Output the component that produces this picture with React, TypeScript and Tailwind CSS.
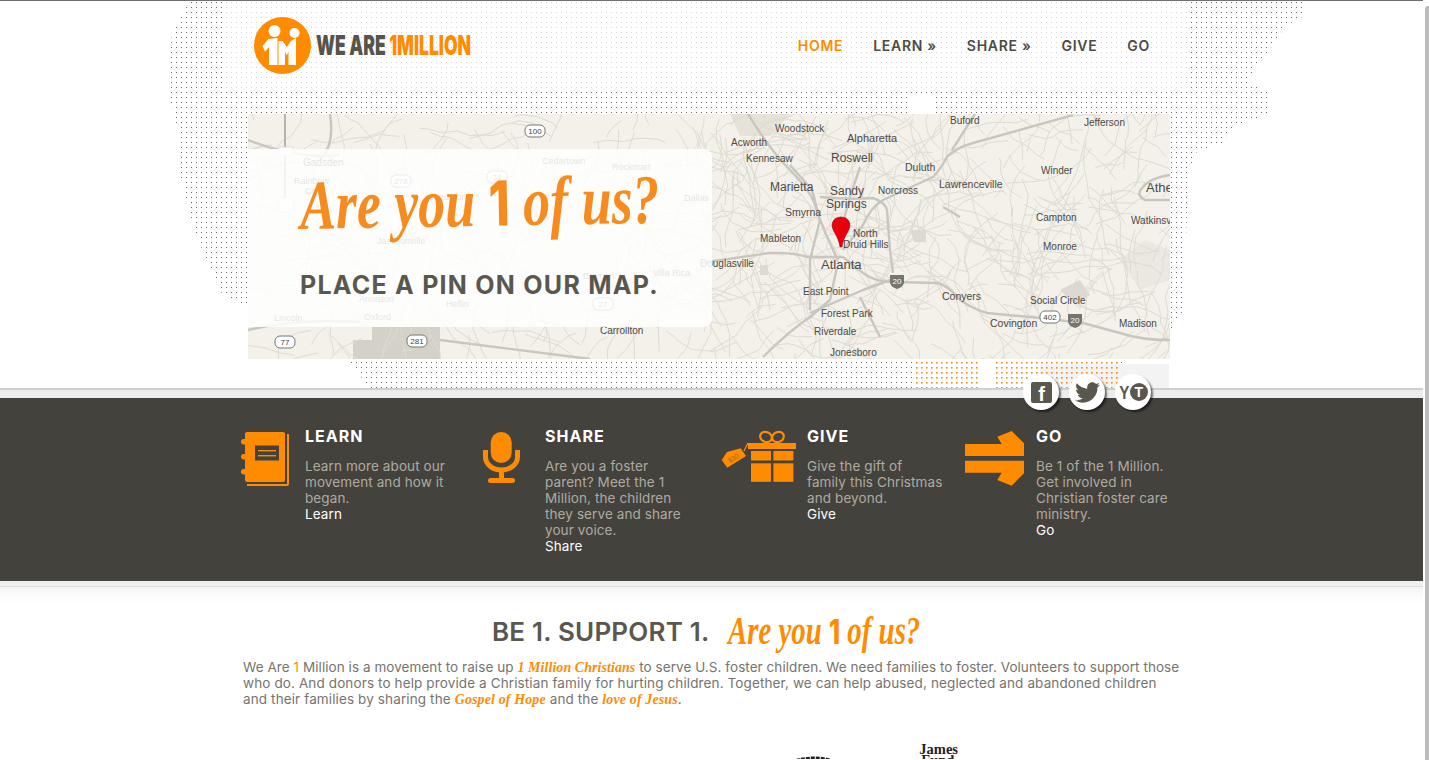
import React from "react";
import { FaTwitter } from "react-icons/fa";

const SCRIPT = "font-['Liberation_Serif',serif] italic font-bold";

function makeRoads() {
  let s = 12345;
  const r = () => {
    s = (s * 16807) % 2147483647;
    return s / 2147483647;
  };
  const out: string[] = [];
  for (let i = 0; i < 620; i++) {
    const dense = i < 430;
    const cx = dense ? 700 + r() * 470 : 248 + r() * 460;
    const cy = 114 + r() * 245;
    let x = cx;
    let y = cy;
    let a = r() * 6.28;
    let d = `M${x.toFixed(1)} ${y.toFixed(1)}`;
    const n = 3 + Math.floor(r() * 5);
    for (let k = 0; k < n; k++) {
      a += (r() - 0.5) * 1.1;
      const l = 6 + r() * 12;
      x += Math.cos(a) * l;
      y += Math.sin(a) * l;
      d += `L${x.toFixed(1)} ${y.toFixed(1)}`;
    }
    out.push(d);
  }
  return out;
}
const minorRoads = makeRoads();

const majorRoads = [
  "M748 114 Q770 150 790 170 T815 205 T825 232 T838 260",
  "M1073 115 L973 143 Q955 148 947 157 Q940 170 933 177 L883 200 Q870 208 863 225 L843 250",
  "M843 257 L863 273 Q875 282 893 282 L937 283 Q948 285 960 300 Q975 310 987 313 L1040 318 L1083 323 L1120 333 Q1140 340 1170 340",
  "M700 263 L770 253 Q790 252 808 257 L843 257",
  "M837 267 L830 300 L810 317",
  "M810 310 L810 260 L820 220 L812 190 L790 165",
  "M820 197 Q850 200 873 198 Q885 202 887 210 L890 250 L893 273",
  "M810 313 Q840 300 863 290 L890 280",
  "M860 167 L850 197 L843 223",
  "M943 207 L960 217",
  "M1170 175 Q1150 178 1143 187 Q1135 195 1145 200 L1170 200",
  "M880 337 L860 297",
  "M763 357 Q790 330 813 315",
  "M320 160 Q335 145 330 114",
  "M975 114 L952 150",
  "M248 140 Q300 160 340 155",
  "M440 340 Q520 350 590 359",
  "M248 330 Q300 318 360 322",
];

type L = [string, number, number, number];
const labels: L[] = [
  ["Woodstock", 775, 132, 10],
  ["Alpharetta", 847, 142, 11],
  ["Acworth", 731, 146, 10],
  ["Kennesaw", 746, 162, 10],
  ["Roswell", 831, 162, 12],
  ["Duluth", 905, 171, 10.5],
  ["Buford", 950, 124, 10],
  ["Jefferson", 1084, 126, 10],
  ["Winder", 1041, 174, 10],
  ["Lawrenceville", 939, 188, 10.5],
  ["Norcross", 878, 194, 10],
  ["Sandy", 830, 195, 12],
  ["Springs", 826, 208, 12],
  ["Marietta", 770, 191, 12],
  ["Smyrna", 785, 216, 10.5],
  ["Campton", 1036, 221, 10],
  ["Athe", 1146, 192, 13],
  ["Watkinsv", 1131, 224, 10],
  ["North", 853, 237, 10],
  ["Druid Hills", 843, 248, 10],
  ["Mableton", 760, 242, 10],
  ["Monroe", 1043, 250, 10],
  ["Douglasville", 700, 267, 10],
  ["Atlanta", 821, 269, 13],
  ["East Point", 803, 295, 10],
  ["Conyers", 942, 300, 10.5],
  ["Social Circle", 1030, 304, 10],
  ["Forest Park", 821, 317, 10],
  ["Covington", 990, 327, 10.5],
  ["Madison", 1119, 327, 10],
  ["Riverdale", 814, 335, 10],
  ["Jonesboro", 830, 356, 10],
  ["Carrollton", 600, 334, 10],
  ["Gadsden", 303, 166, 10],
  ["Rainbow", 294, 184, 9],
  ["City", 305, 194, 9],
  ["Cedartown", 542, 164, 9],
  ["Rockmart", 612, 170, 9],
  ["Dallas", 684, 201, 9],
  ["Piedmont", 431, 200, 9],
  ["Jacksonville", 377, 244, 9],
  ["Anniston", 359, 302, 9],
  ["Heflin", 446, 307, 9],
  ["Lincoln", 274, 321, 9],
  ["Oxford", 364, 320, 9],
  ["Bremen", 583, 279, 9],
  ["Villa Rica", 653, 276, 9],
];

const shields: [string, number, number][] = [
  ["100", 535, 131],
  ["278", 401, 181],
  ["74", 497, 177],
  ["27", 603, 304],
  ["77", 285, 342],
  ["281", 417, 341],
  ["402", 1050, 317],
];
const interstates: [number, number][] = [
  [897, 281],
  [1075, 320],
];

function USMap() {
  return (
    <svg viewBox="248 114 922 245" className="absolute inset-0 w-full h-full">
      <rect x="248" y="114" width="922" height="245" fill="#f4f1ea" />
      <path d="M353 359 L353 340 L372 340 L372 327 L440 327 L440 359 Z" fill="#d4d1c9" />
      <path d="M1120 260 l25 -20 l25 10 v30 l-30 10 Z" fill="#ebe8e1" />
      <path d="M730 114 h60 l-20 22 h-30 Z" fill="#e5e2da" />
      <path d="M910 230 h16 v12 h-12 Z M760 265 h8 v10 h-8 Z M1060 290 l20 -10 l10 15 l-15 10 Z" fill="#dcd9d1" />
      <g fill="none" stroke="#dedbd3" strokeWidth="1">
        {minorRoads.map((d, i) => (
          <path key={i} d={d} />
        ))}
      </g>
      <g fill="none" stroke="#c9c6bf" strokeWidth="2.4" strokeLinejoin="round">
        {majorRoads.map((d, i) => (
          <path key={i} d={d} />
        ))}
      </g>
      <line x1="285" y1="114" x2="285" y2="205" stroke="#b5b2ab" strokeWidth="2" />
      <rect x="279" y="147" width="14" height="8" rx="1" fill="#fff" stroke="#ddd" />
      <rect x="279" y="198" width="14" height="14" rx="1" fill="#fff" stroke="#ddd" />
      {shields.map(([t, x, y], i) => (
        <g key={i}>
          <rect x={x - 10} y={y - 6} width="20" height="12" rx="5" fill="#fff" stroke="#777" />
          <text x={x} y={y + 3} textAnchor="middle" fontSize="8" fill="#444" fontFamily="Liberation Sans, sans-serif">
            {t}
          </text>
        </g>
      ))}
      {interstates.map(([x, y], i) => (
        <g key={i}>
          <path d={`M${x - 7} ${y - 6} h14 v7 q0 5 -7 7 q-7 -2 -7 -7 Z`} fill="#77756f" />
          <text x={x} y={y + 3} textAnchor="middle" fontSize="8" fill="#fff" fontFamily="Liberation Sans, sans-serif">
            20
          </text>
        </g>
      ))}
      {labels.map(([t, x, y, s], i) => (
        <text key={i} x={x} y={y} fontSize={s} fill="#4c4a46" fontFamily="Liberation Sans, sans-serif">
          {t}
        </text>
      ))}
    </svg>
  );
}

function Dots() {
  const country =
    "190,0 1306,0 1306,14 1285,25 1275,42 1260,60 1248,80 1270,92 1270,113 1235,125 1222,142 1195,152 1188,175 1186,240 1186,305 1170,330 1122,360 1122,389 370,389 350,360 300,330 222,293 195,232 180,172 178,130 168,92 172,30";
  return (
    <svg className="absolute left-0 top-0" width="1422" height="390" viewBox="0 0 1422 390">
      <defs>
        <pattern id="d" width="5" height="5" patternUnits="userSpaceOnUse">
          <rect x="1" y="1" width="1" height="1" fill="#666" />
        </pattern>
        <pattern id="o" width="5" height="5" patternUnits="userSpaceOnUse">
          <rect x="1" y="1" width="1.6" height="1.6" fill="#f08a14" />
        </pattern>
      </defs>
      <polygon points={country} fill="url(#d)" />
      <rect x="225" y="0" width="965" height="90" fill="#fff" opacity="0.72" />
      <rect x="908" y="92" width="24" height="22" fill="#fff" />
      <rect x="1040" y="363" width="129" height="27" fill="#f3f3f3" />
      <rect x="915" y="360" width="66" height="29" fill="#fff" />
      <rect x="981" y="360" width="12" height="29" fill="#fff" />
      <rect x="993" y="360" width="47" height="29" fill="#fff" />
      <rect x="915" y="360" width="66" height="29" fill="url(#o)" />
      <rect x="993" y="360" width="127" height="29" fill="url(#o)" />
    </svg>
  );
}

function Logo() {
  return (
    <svg width="57" height="57" viewBox="0 0 57 57" className="shrink-0">
      <circle cx="28.5" cy="28.5" r="28.5" fill="#ff8c00" />
      <circle cx="20.5" cy="14" r="6" fill="#fff" />
      <circle cx="40.5" cy="16" r="5" fill="#fff" />
      <polygon points="8.5,29 14.5,22 23.5,21 23.5,48 15,48 15,30 11,34.5" fill="#fff" />
      <polygon points="24.5,24 28.5,24 32.8,30 37,24 42,21 42,48 34.5,48 34.5,34.5 32.8,38.5 31,34.5 31,48 24.5,48" fill="#fff" />
    </svg>
  );
}

function Notebook() {
  return (
    <svg width="54" height="62" viewBox="0 0 54 62" className="shrink-0">
      <rect x="7" y="4" width="40" height="50" rx="2" fill="#ff8c00" />
      <path d="M49 6 h2 v50 a2 2 0 0 1 -2 2 h-40 v-2 h40 Z" fill="#ff8c00" />
      {[13.7, 28.7, 43.7].map((y) => (
        <rect key={y} x="3" y={y - 2.7} width="9" height="5.4" rx="2.7" fill="#ff8c00" />
      ))}
      <rect x="17" y="17.5" width="24" height="15" fill="#44423d" />
      <rect x="20" y="22" width="18" height="1.4" fill="#ff8c00" />
      <rect x="20" y="27" width="18" height="1.4" fill="#ff8c00" />
    </svg>
  );
}

function Mic() {
  return (
    <svg width="44" height="60" viewBox="0 0 44 60" className="shrink-0">
      <rect x="10.7" y="4" width="21" height="31" rx="10.5" fill="#ff8c00" />
      <path d="M5.5 22 v7 a16 13 0 0 0 32 0 v-7" fill="none" stroke="#ff8c00" strokeWidth="5" />
      <rect x="19" y="42" width="5" height="10" fill="#ff8c00" />
      <rect x="8" y="50" width="27" height="5" rx="2.5" fill="#ff8c00" />
    </svg>
  );
}

function Gift() {
  return (
    <svg width="80" height="58" viewBox="0 0 80 58" className="shrink-0">
      <rect x="28" y="15" width="48" height="6" fill="#ff8c00" />
      <rect x="31" y="23" width="20" height="9.5" fill="#ff8c00" />
      <rect x="53.4" y="23" width="20" height="9.5" fill="#ff8c00" />
      <rect x="31" y="35.3" width="20" height="18.5" fill="#ff8c00" />
      <rect x="53.4" y="35.3" width="20" height="18.5" fill="#ff8c00" />
      <ellipse cx="46" cy="9" rx="6" ry="5" fill="none" stroke="#ff8c00" strokeWidth="2.2" transform="rotate(25 46 9)" />
      <ellipse cx="58" cy="9" rx="6" ry="5" fill="none" stroke="#ff8c00" strokeWidth="2.2" transform="rotate(-25 58 9)" />
      <path d="M24 23 L28 15" stroke="#ff8c00" strokeWidth="1.2" />
      <polygon points="1.7,32 7,24 20.7,20.3 26,28 7.3,39.7" fill="#ff8c00" />
      <text x="13.5" y="32.5" fontSize="7" fill="#b3660a" textAnchor="middle" transform="rotate(-31 13.5 30)" fontFamily="Liberation Sans, sans-serif">
        $30
      </text>
    </svg>
  );
}

function Arrow() {
  return (
    <svg width="68" height="62" viewBox="0 0 68 62" className="shrink-0">
      <polygon points="5,16 41.7,16 37.3,8.7 51.7,3 64,15.3 64,28 5,28" fill="#ff8c00" />
      <polygon points="5,32.7 64,32.7 64,45.3 51.7,57.7 37.3,52 41.7,44.7 5,44.7" fill="#ff8c00" />
    </svg>
  );
}

function Social({ children }: { children: React.ReactNode }) {
  return (
    <div className="w-9 h-9 rounded-full bg-white shadow-[2px_2px_2px_rgba(0,0,0,0.55)] flex items-center justify-center text-[#5a574f]">
      {children}
    </div>
  );
}

function Feature({
  icon,
  title,
  lines,
  link,
  iconW,
}: {
  icon: React.ReactNode;
  title: string;
  lines: string[];
  link: string;
  iconW: string;
}) {
  return (
    <div className="flex">
      <div className={iconW}>{icon}</div>
      <div className="whitespace-nowrap">
        <div className="text-[16px] leading-[20px] font-bold text-white tracking-[1px]">{title}</div>
        <div className="mt-[12px] text-[13.5px] leading-[16px] tracking-[0.1px] text-[#aeaaa1]">
          {lines.map((l) => (
            <div key={l}>{l}</div>
          ))}
          <div className="text-white">{link}</div>
        </div>
      </div>
    </div>
  );
}

export default function App() {
  return (
    <div className="flex h-[760px] overflow-hidden bg-white font-['Inter',sans-serif]">
      <div className="w-[1423px] shrink-0 border-t border-[#6f6f6f]">
        <div className="relative h-[387px]">
          <Dots />
          <div className="relative flex h-[113px] items-start justify-between pl-[254px] pr-[273px] pt-[16px]">
            <div className="flex items-center gap-[5px]">
              <Logo />
              <div className="font-black text-[27px] leading-none whitespace-nowrap text-[#57544c] scale-x-[0.65] origin-left">
                WE ARE <span className="text-[#ff8c00]">1MILLION</span>
              </div>
            </div>
            <nav className="flex gap-[30px] text-[14px] font-semibold tracking-[0.7px] text-[#4d4a44] whitespace-nowrap mt-[18px]">
              <span className="text-[#ff8c00]">HOME</span>
              <span>LEARN »</span>
              <span>SHARE »</span>
              <span>GIVE</span>
              <span>GO</span>
            </nav>
          </div>
          <div className="relative ml-[248px] w-[922px] h-[245px] overflow-hidden">
            <USMap />
            <div className="absolute left-0 top-[35px] w-[464px] h-[178px] bg-white/85 rounded-r-[8px] pl-[52px]">
              <div className={`${SCRIPT} text-[#f68b1f] text-[70px] leading-[78px] mt-[18px] whitespace-nowrap -rotate-1 scale-x-[0.77] origin-left`}>
                Are you <span className="not-italic font-['Inter',sans-serif] font-extrabold text-[62px]">1</span> of us?
              </div>
              <div className="mt-[24px] text-[25px] leading-[30px] font-bold tracking-[1.25px] text-[#5a574f] whitespace-nowrap">
                PLACE A PIN ON OUR MAP.
              </div>
            </div>
            <svg className="absolute left-[582px] top-[102px]" width="22" height="32" viewBox="0 0 22 32">
              <path d="M11 1 C5 1 2 5 2 9.5 C2 15 8 19 10 31 H12 C14 19 20 15 20 9.5 C20 5 17 1 11 1 Z" fill="#e8000d" stroke="#8a0a0a" strokeWidth="0.5" />
            </svg>
          </div>
        </div>
        <div className="relative h-[10px] bg-[#ececec] border-t-2 border-[#cfcfcf]">
          <div className="absolute left-[1023px] top-[-16px] flex gap-[10px]">
            <Social>
              <div className="w-[21px] h-[21px] bg-[#5a574f] rounded-[2px] flex items-center justify-center">
                <span className="text-white font-['Liberation_Sans',sans-serif] font-bold text-[20px] leading-[20px] pt-[3px] pl-[1px]">f</span>
              </div>
            </Social>
            <Social>
              <FaTwitter className="w-[25px] h-[25px]" />
            </Social>
            <Social>
              <span className="font-['Liberation_Sans',sans-serif] font-bold text-[19px] leading-none scale-x-[0.8] -mr-[1px]">Y</span>
              <span className="w-[18px] h-[18px] rounded-full bg-[#5a574f] text-white text-[14px] font-bold leading-[18px] text-center font-['Liberation_Sans',sans-serif]">T</span>
            </Social>
          </div>
        </div>
        <div className="h-[183px] bg-[#44423d] grid grid-cols-[234px_245px_243px_1fr] pl-[238px] pt-[28px]">
          <Feature
            iconW="w-[67px] mt-[2px]"
            icon={<Notebook />}
            title="LEARN"
            lines={["Learn more about our", "movement and how it", "began."]}
            link="Learn"
          />
          <Feature
            iconW="w-[73px] mt-[2px] pl-[8px]"
            icon={<Mic />}
            title="SHARE"
            lines={["Are you a foster", "parent? Meet the 1", "Million, the children", "they serve and share", "your voice."]}
            link="Share"
          />
          <Feature
            iconW="w-[90px] mt-[2px] pl-[3px]"
            icon={<Gift />}
            title="GIVE"
            lines={["Give the gift of", "family this Christmas", "and beyond."]}
            link="Give"
          />
          <Feature
            iconW="w-[76px] mt-[2px]"
            icon={<Arrow />}
            title="GO"
            lines={["Be 1 of the 1 Million.", "Get involved in", "Christian foster care", "ministry."]}
            link="Go"
          />
        </div>
        <div className="h-[6px] bg-[#efefef] border-b border-[#dedede]" />
        <div className="h-[172px] overflow-hidden bg-[linear-gradient(#f5f5f5,#ffffff_16px)]">
          <div className="flex items-center pl-[492px] pt-[28px] h-[60px] whitespace-nowrap">
            <span className="text-[26px] font-semibold tracking-[0.2px] text-[#5a574f]">BE 1. SUPPORT 1.</span>
            <span className={`${SCRIPT} text-[#ff8c00] text-[39px] leading-[44px] ml-[19px] scale-x-[0.74] origin-left`}>
              Are you <span className="not-italic font-['Inter',sans-serif] font-extrabold text-[34px]">1</span> of us?
            </span>
          </div>
          <div className="pl-[243px] mt-[12px] text-[13.5px] leading-[16px] text-[#77746e] whitespace-nowrap">
            <div className="h-[16px] tracking-[0.06px]">
              We Are <span className="text-[#ff8c00]">1</span> Million is a movement to raise up{" "}
              <span className={`${SCRIPT} text-[#ff8c00] text-[14px] leading-[14px]`}>1 Million Christians</span> to serve U.S. foster children. We need families to foster. Volunteers to support those
            </div>
            <div className="h-[16px] tracking-[0.12px]">who do. And donors to help provide a Christian family for hurting children. Together, we can help abused, neglected and abandoned children</div>
            <div className="h-[16px] tracking-[0.12px]">
              and their families by sharing the <span className={`${SCRIPT} text-[#ff8c00] text-[14px] leading-[14px]`}>Gospel of Hope</span> and the{" "}
              <span className={`${SCRIPT} text-[#ff8c00] text-[14px] leading-[14px]`}>love of Jesus</span>.
            </div>
          </div>
          <div className="relative h-[40px] mt-[36px]">
            <svg className="absolute left-[780px] top-[11px]" width="68" height="12" viewBox="0 0 68 12">
              <path d="M2 12 Q34 -4 66 12" fill="none" stroke="#222" strokeWidth="3" strokeDasharray="4 1" />
            </svg>
            <div className="absolute left-[916px] top-[1px] font-['Liberation_Serif',serif] font-bold text-[14.5px] leading-[11px] text-[#222] text-right w-[42px]">
              James<br />Fund.
            </div>
          </div>
        </div>
      </div>
      <div className="flex-1 pl-[2px] pt-[6px]">
        <div className="h-full bg-[#bcbcbc] rounded-tl-[3px]" />
      </div>
    </div>
  );
}
